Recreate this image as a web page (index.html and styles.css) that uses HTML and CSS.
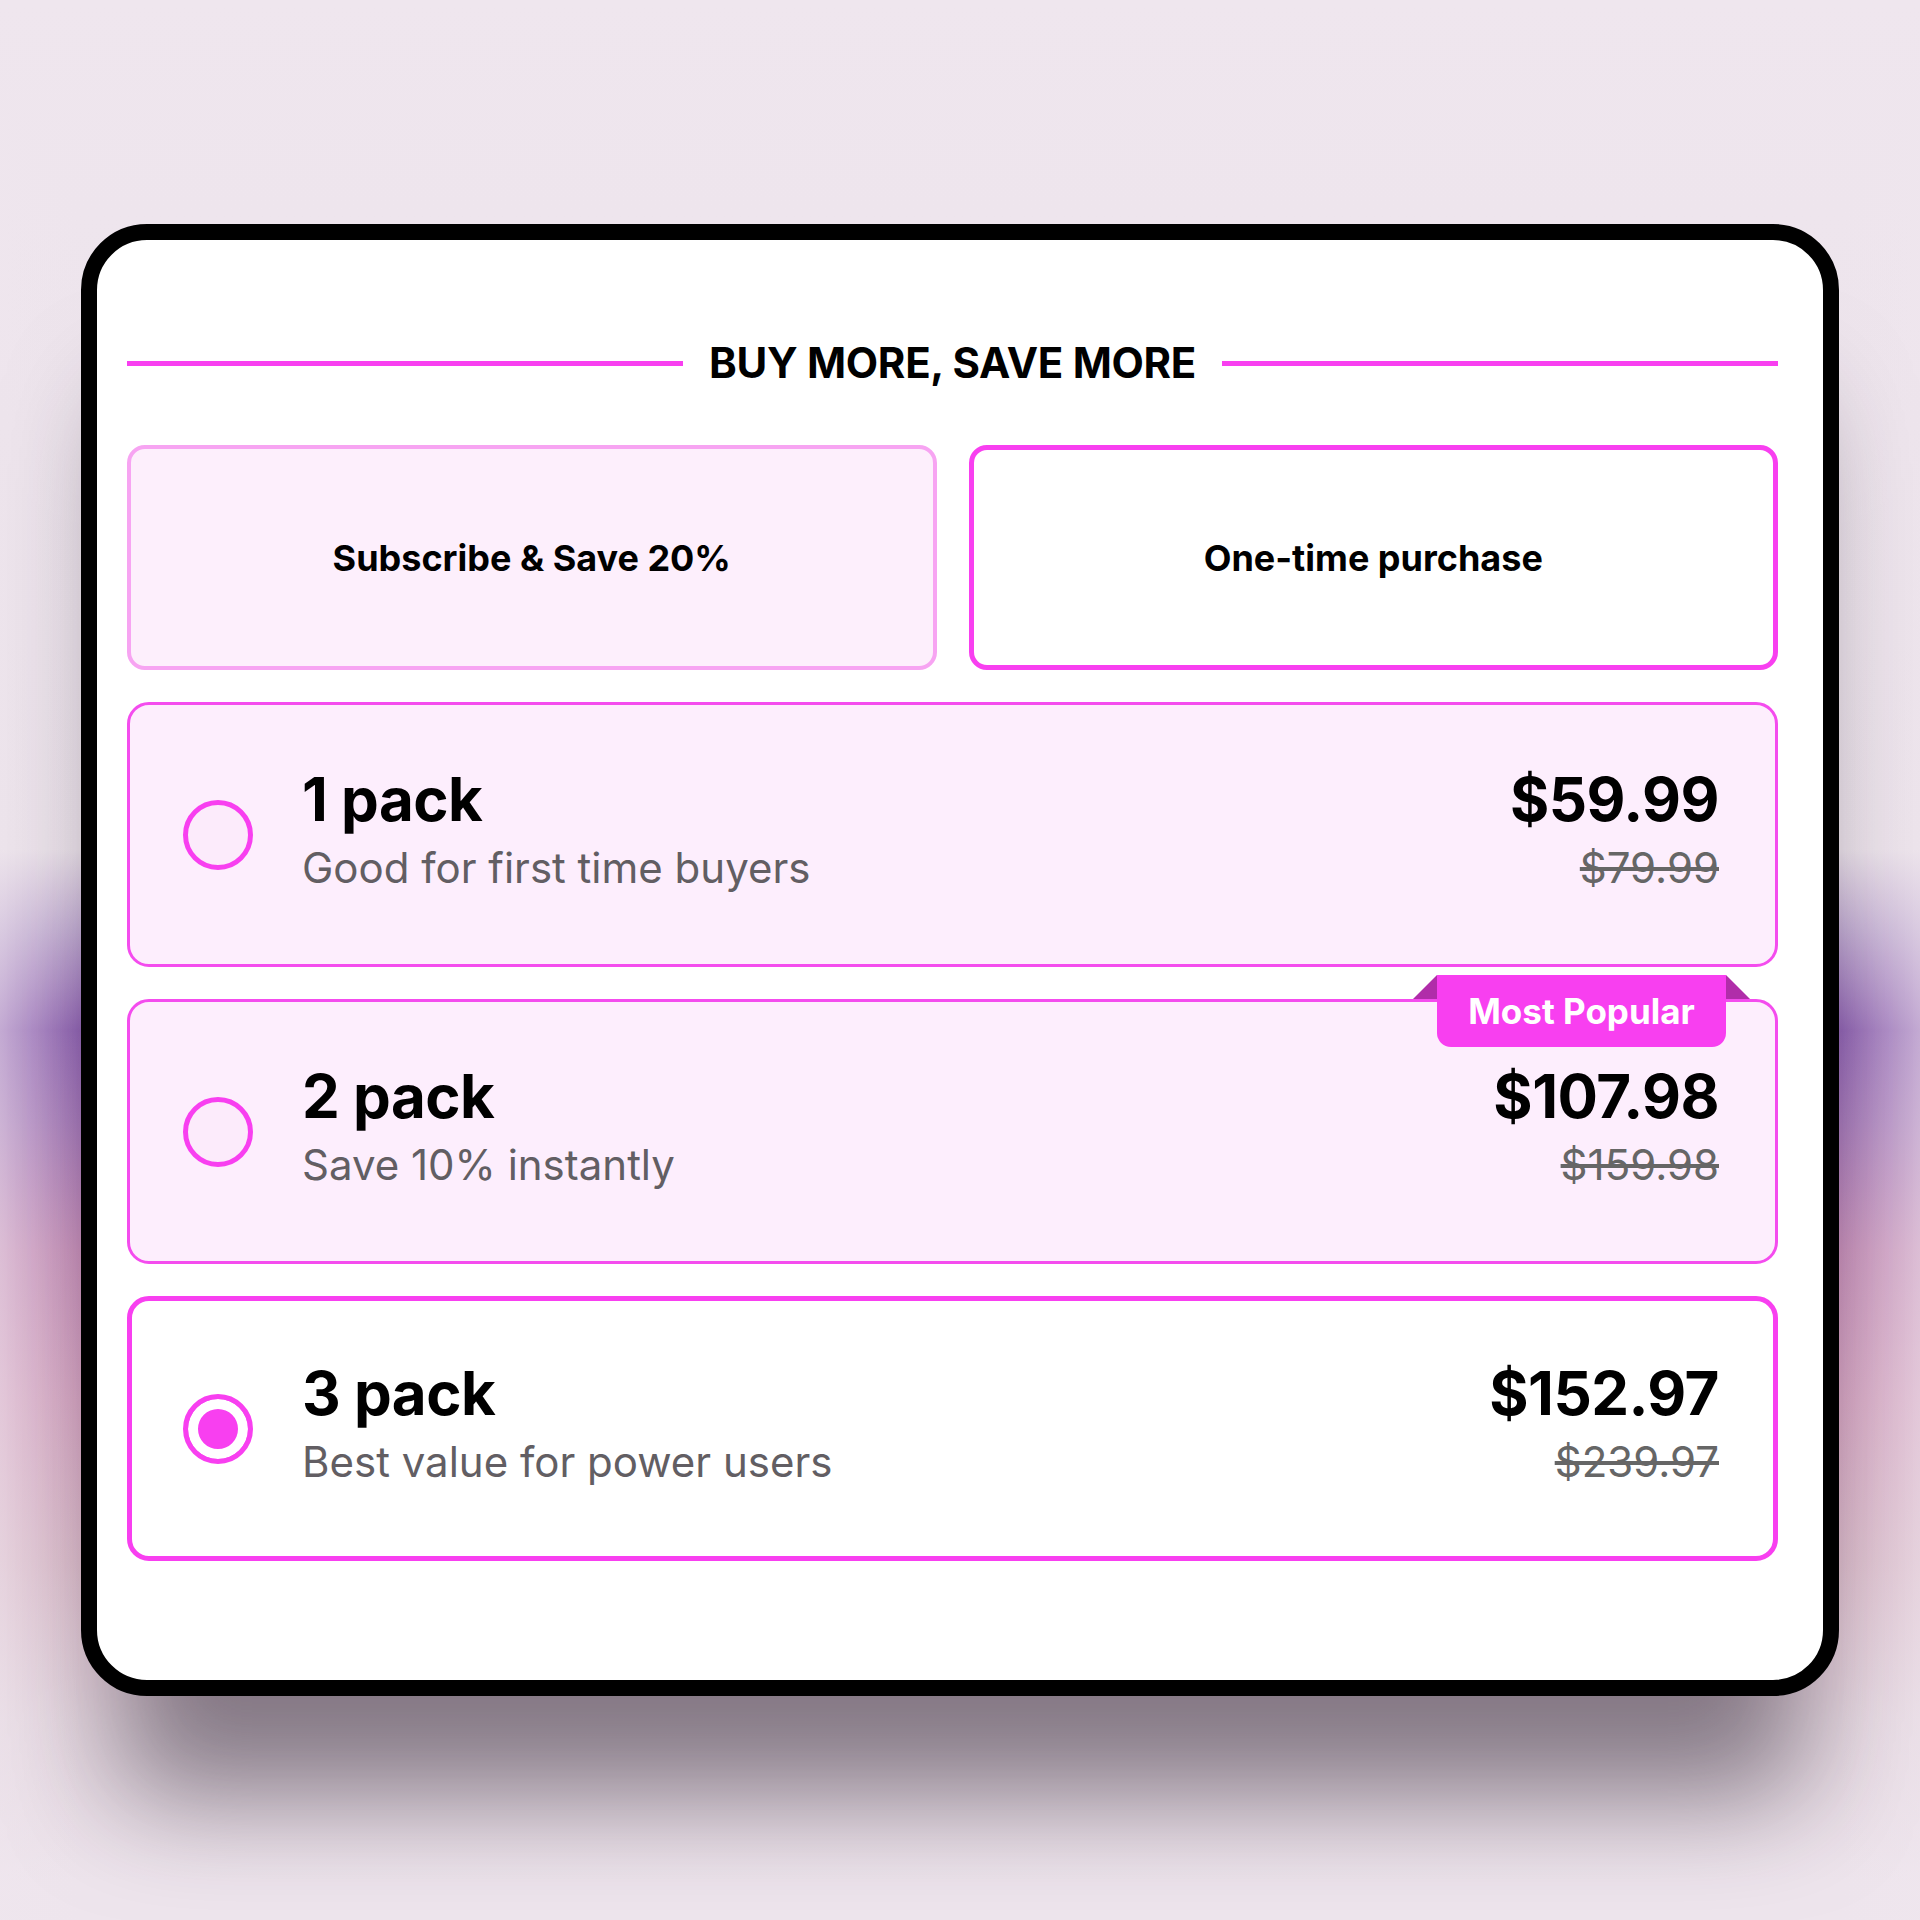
FILE: index.html
```html
<!DOCTYPE html>
<html lang="en">
<head>
  <meta charset="UTF-8" />
  <meta name="viewport" content="width=device-width, initial-scale=1.0" />
  <title>Buy more, save more</title>
  <link rel="stylesheet" href="styles.css">
</head>
<body>
  <div class="stage">
    <section class="offer">
      <h2 class="offer-title"><span>BUY MORE, SAVE MORE</span></h2>

      <div class="plans">
        <button class="plan plan-sub">Subscribe &amp; Save 20%</button>
        <button class="plan plan-once">One-time purchase</button>
      </div>

      <div class="packs">
        <label class="pack">
          <span class="radio"></span>
          <span class="pack-info">
            <span class="pack-name">1 pack</span>
            <span class="pack-note">Good for first time buyers</span>
          </span>
          <span class="pack-price">
            <span class="price-now">$59.99</span>
            <span class="price-old">$79.99</span>
          </span>
        </label>

        <label class="pack">
          <span class="badge">Most Popular</span>
          <span class="radio"></span>
          <span class="pack-info">
            <span class="pack-name">2 pack</span>
            <span class="pack-note">Save 10% instantly</span>
          </span>
          <span class="pack-price">
            <span class="price-now">$107.98</span>
            <span class="price-old">$159.98</span>
          </span>
        </label>

        <label class="pack selected">
          <span class="radio"></span>
          <span class="pack-info">
            <span class="pack-name">3 pack</span>
            <span class="pack-note">Best value for power users</span>
          </span>
          <span class="pack-price">
            <span class="price-now">$152.97</span>
            <span class="price-old">$239.97</span>
          </span>
        </label>
      </div>
    </section>
  </div>
</body>
</html>
```

FILE: styles.css
```css
* {
  box-sizing: border-box;
}
body {
  margin: 0;
  min-height: 1920px;
  font-family: Inter, "Noto Sans", sans-serif;
  color: #000;
  background:
    linear-gradient(to right, rgba(239, 230, 238, 0.55) 0, rgba(239, 230, 238, 0) 80px, rgba(239, 230, 238, 0) 1840px, rgba(239, 230, 238, 0.55) 1920px),
    linear-gradient(to bottom, #efe6ee 0, #ebe2ea 850px, #c2acd3 930px, #9164b4 1030px, #a477b8 1120px, #c78fb9 1250px, #d6a5c2 1400px, #dcbccb 1560px, #e6d8e1 1720px, #eee5ed 1880px);
}
.stage {
  padding: 224px 81px 0;
}

/* card */
.offer {
  background: #fff;
  border: 16px solid #000;
  border-radius: 66px;
  padding: 100px 45px 119px 30px;
  box-shadow: 0 140px 110px -40px rgba(45, 35, 50, 0.52);
}
.offer-title {
  display: flex;
  align-items: center;
  gap: 26px;
  margin: 0 0 59px;
  font-size: 42px;
  font-weight: 700;
  line-height: 46px;
  letter-spacing: -0.3px;
}
.offer-title::before,
.offer-title::after {
  content: "";
  flex: 1;
  height: 5px;
  background: #f83ff0;
}

/* subscribe / one-time */
.plans {
  display: grid;
  grid-template-columns: 1fr 1fr;
  gap: 32px;
  margin-bottom: 32px;
}
.plan {
  height: 225px;
  border-radius: 18px;
  font-family: Inter, sans-serif;
  font-size: 36px;
  font-weight: 700;
  color: #000;
  cursor: pointer;
}
.plan-sub {
  background: #fdeffc;
  border: 4px solid #f7a4f2;
}
.plan-once {
  background: #fff;
  border: 5px solid #f83ff0;
}

/* pack rows */
.packs {
  display: flex;
  flex-direction: column;
  gap: 32px;
}
.pack {
  position: relative;
  display: flex;
  align-items: center;
  height: 265px;
  padding: 0 56px 0 53px;
  background: #fdeefd;
  border: 3px solid #f44cee;
  border-radius: 22px;
  cursor: pointer;
}
.pack.selected {
  background: #fff;
  border: 5px solid #f83ff0;
  padding-left: 51px;
  padding-right: 54px;
}
.radio {
  flex: none;
  width: 70px;
  height: 70px;
  border: 5px solid #f83ff0;
  border-radius: 50%;
  background: #fcebfb;
}
.selected .radio {
  background: #f83ff0;
  box-shadow: inset 0 0 0 10px #fff;
}
.pack-info,
.pack-price {
  display: flex;
  flex-direction: column;
  margin-bottom: 10px;
}
.pack-info {
  margin-left: 49px;
}
.pack-name {
  font-size: 60px;
  font-weight: 700;
  line-height: 70px;
  letter-spacing: -0.5px;
}
.pack-note {
  margin-top: 6px;
  font-size: 42px;
  line-height: 56px;
  color: #625e63;
}
.pack-price {
  align-items: flex-end;
  margin-left: auto;
}
.price-now {
  font-size: 60px;
  font-weight: 700;
  line-height: 70px;
  letter-spacing: -0.5px;
}
.price-old {
  margin-top: 6px;
  font-size: 42px;
  line-height: 56px;
  color: #666;
  text-decoration: line-through;
}

/* ribbon over the 2 pack row */
.badge {
  position: absolute;
  top: -27px;
  right: 49px;
  width: 289px;
  height: 72px;
  display: flex;
  align-items: center;
  justify-content: center;
  background: #f83ff0;
  color: #fff;
  font-size: 35px;
  font-weight: 700;
  border-radius: 0 0 14px 14px;
}
.badge::before,
.badge::after {
  content: "";
  position: absolute;
  top: 0;
  width: 0;
  height: 0;
  border-bottom: 24px solid #b02da9;
}
.badge::before {
  left: -24px;
  border-left: 24px solid transparent;
}
.badge::after {
  right: -24px;
  border-right: 24px solid transparent;
}
```
